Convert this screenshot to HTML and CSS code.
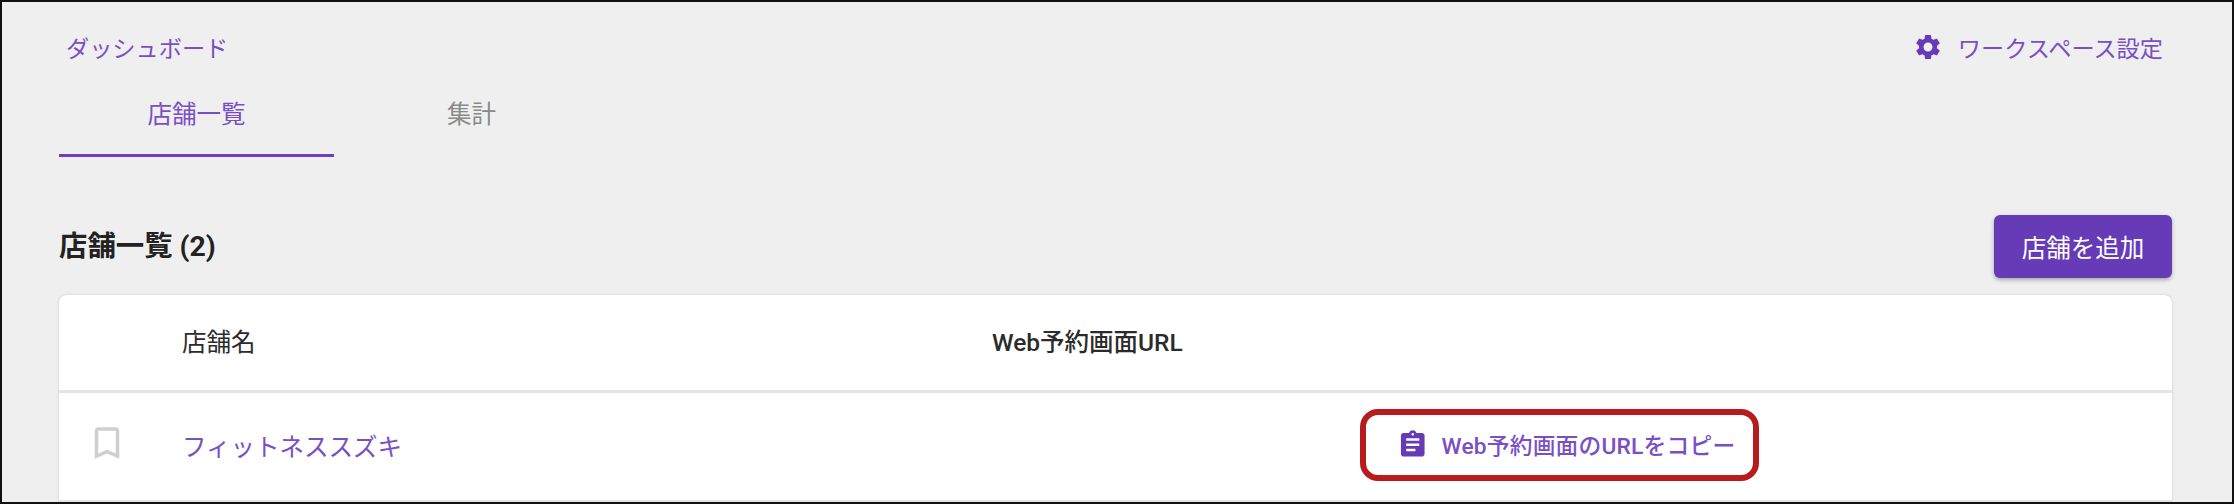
FILE: index.html
```html
<!DOCTYPE html>
<html lang="ja">
<head>
<meta charset="UTF-8">
<meta name="viewport" content="width=device-width, initial-scale=1.0">
<title>店舗一覧</title>
<link rel="stylesheet" href="styles.css">
</head>
<body>
<div class="frame">
    <div class="topbar">
        <a class="crumb" href="#">ダッシュボード</a>
        <a class="settings" href="#">
            <svg class="settings-icon" viewBox="0 0 24 24"><path d="M19.14 12.94c.04-.3.06-.61.06-.94 0-.32-.02-.64-.07-.94l2.03-1.58a.49.49 0 0 0 .12-.61l-1.92-3.32a.488.488 0 0 0-.59-.22l-2.39.96c-.5-.38-1.03-.7-1.62-.94l-.36-2.54a.484.484 0 0 0-.48-.41h-3.84c-.24 0-.43.17-.47.41l-.36 2.54c-.59.24-1.13.57-1.62.94l-2.39-.96c-.22-.08-.47 0-.59.22L2.74 8.87c-.12.21-.08.47.12.61l2.03 1.58c-.05.3-.09.63-.09.94s.02.64.07.94l-2.03 1.58a.49.49 0 0 0-.12.61l1.92 3.32c.12.22.37.29.59.22l2.39-.96c.5.38 1.03.7 1.62.94l.36 2.54c.05.24.24.41.48.41h3.84c.24 0 .44-.17.47-.41l.36-2.54c.59-.24 1.13-.56 1.62-.94l2.39.96c.22.08.47 0 .59-.22l1.92-3.32c.12-.22.07-.47-.12-.61l-2.01-1.58zM12 15.6c-1.98 0-3.6-1.62-3.6-3.6s1.62-3.6 3.6-3.6 3.6 1.62 3.6 3.6-1.62 3.6-3.6 3.6z"/></svg>
            ワークスペース設定
        </a>
    </div>
    <div class="tabs">
        <a class="tab tab-active" href="#">店舗一覧</a>
        <a class="tab" href="#">集計</a>
    </div>
    <div class="list-head">
        <h2>店舗一覧 (2)</h2>
        <button class="add-btn">店舗を追加</button>
    </div>
    <div class="card">
        <div class="row row-head">
            <div></div>
            <div>店舗名</div>
            <div class="url-head">Web予約画面URL</div>
            <div></div>
        </div>
        <div class="row">
            <div class="mark">
                <svg class="mark-icon" viewBox="0 0 24 24"><path d="M17 3H7c-1.100 0-2 .9-2 2v16l7-3 7 3V5c0-1.100-.9-2-2-2zm0 15-5-2.180L7 18V5h10v13z"/></svg>
            </div>
            <a class="shop-name" href="#">フィットネススズキ</a>
            <div></div>
            <div class="copy-cell">
                <a class="copy-btn" href="#">
                    <svg class="copy-icon" viewBox="0 0 24 24"><path d="M19 3h-4.180C14.400 1.840 13.300 1 12 1c-1.300 0-2.400.84-2.820 2H5c-1.100 0-2 .9-2 2v14c0 1.100.9 2 2 2h14c1.100 0 2-.9 2-2V5c0-1.100-.9-2-2-2zm-7 0c.55 0 1 .45 1 1s-.45 1-1 1-1-.45-1-1 .45-1 1-1zm2 14H7v-2h7v2zm3-4H7v-2h10v2zm0-4H7V7h10v2z"/></svg>
                    Web予約画面のURLをコピー
                </a>
            </div>
        </div>
    </div>
</div>
</body>
</html>
```

FILE: styles.css
```css
* {
    box-sizing: border-box;
}
html, body {
    margin: 0;
    padding: 0;
    height: 100%;
}
body {
    font-family: Roboto, 'Noto Sans CJK JP', sans-serif;
    color: #2b2b2b;
    overflow: hidden;
}
a {
    text-decoration: none;
    color: #7a4fc6;
}
.frame {
    height: 504px;
    border: 2px solid #111;
    background-color: #efefef;
    padding: 0 60px 0 57px;
    overflow: hidden;
}
.topbar {
    display: flex;
    justify-content: space-between;
    align-items: center;
    height: 42px;
    margin-top: 24px;
    padding: 0 9px 0 7px;
}
.crumb, .settings {
    font-size: 23.2px;
}
.settings {
    display: flex;
    align-items: center;
    gap: 15px;
}
.settings-icon {
    width: 30px;
    height: 30px;
    fill: #673ab7;
}
.tabs {
    display: flex;
    height: 89px;
}
.tab {
    width: 275px;
    height: 89px;
    padding-top: 30px;
    line-height: 34px;
    text-align: center;
    font-size: 24.5px;
    color: #8a8a8a;
}
.tab-active {
    color: #7a4fc6;
    border-bottom: 3px solid #6f3fc0;
}
.list-head {
    display: flex;
    justify-content: space-between;
    align-items: center;
    margin-top: 58px;
    height: 63px;
}
.list-head h2 {
    margin: 0;
    padding-bottom: 6px;
    font-size: 28.4px;
    font-weight: 700;
    color: #222;
}
.add-btn {
    width: 178px;
    height: 63px;
    border: none;
    border-radius: 6px;
    background-color: #673ab7;
    color: #fff;
    font-family: inherit;
    font-size: 24.5px;
    box-shadow: 0 2px 4px rgba(0,0,0,0.3);
}
.card {
    margin-top: 17px;
    background-color: #fff;
    border-radius: 8px 8px 0 0;
    box-shadow: 0 0 3px rgba(0,0,0,0.15);
}
.row {
    display: grid;
    grid-template-columns: 123px 810px 368px 1fr;
    align-items: center;
    height: 109px;
    padding-bottom: 3px;
    border-bottom: 2px solid #e4e4e4;
    font-size: 24.5px;
}
.row-head {
    height: 98px;
    padding-bottom: 5px;
    border-bottom-width: 3px;
}
.url-head {
    font-weight: 500;
}
.mark {
    display: flex;
    padding-left: 27px;
    padding-bottom: 5px;
}
.mark-icon {
    width: 42px;
    height: 42px;
    fill: #cfcfcf;
}
.copy-btn {
    display: flex;
    align-items: center;
    gap: 13px;
    width: 399px;
    height: 72px;
    padding-left: 31px;
    padding-bottom: 1px;
    border: 6px solid #b71c1c;
    border-radius: 18px;
    font-size: 22.75px;
    font-weight: 500;
    letter-spacing: 0.2px;
}
.copy-icon {
    width: 31.5px;
    height: 31.5px;
    fill: #673ab7;
}
```
